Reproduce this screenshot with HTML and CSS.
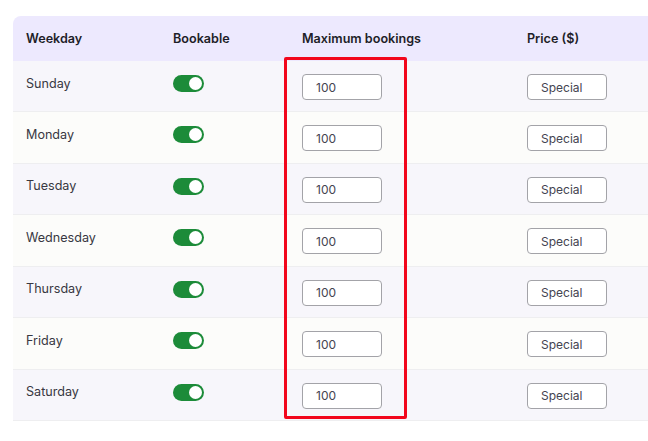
FILE: index.html
```html
<!DOCTYPE html>
<html>
<head>
<meta charset="utf-8">
<link rel="stylesheet" href="styles.css">
</head>
<body>
<div class="page">
  <div class="table">
    <div class="row head">
      <div class="cell">Weekday</div>
      <div class="cell">Bookable</div>
      <div class="cell">Maximum bookings</div>
      <div class="cell">Price ($)</div>
    </div>
    <div class="row odd">
      <div class="cell txt">Sunday</div>
      <div class="cell tog"><span class="toggle"><span class="knob"></span></span></div>
      <div class="cell"><input class="field" value="100"></div>
      <div class="cell"><input class="field" value="Special"></div>
    </div>
    <div class="row even">
      <div class="cell txt">Monday</div>
      <div class="cell tog"><span class="toggle"><span class="knob"></span></span></div>
      <div class="cell"><input class="field" value="100"></div>
      <div class="cell"><input class="field" value="Special"></div>
    </div>
    <div class="row odd">
      <div class="cell txt">Tuesday</div>
      <div class="cell tog"><span class="toggle"><span class="knob"></span></span></div>
      <div class="cell"><input class="field" value="100"></div>
      <div class="cell"><input class="field" value="Special"></div>
    </div>
    <div class="row even">
      <div class="cell txt">Wednesday</div>
      <div class="cell tog"><span class="toggle"><span class="knob"></span></span></div>
      <div class="cell"><input class="field" value="100"></div>
      <div class="cell"><input class="field" value="Special"></div>
    </div>
    <div class="row odd">
      <div class="cell txt">Thursday</div>
      <div class="cell tog"><span class="toggle"><span class="knob"></span></span></div>
      <div class="cell"><input class="field" value="100"></div>
      <div class="cell"><input class="field" value="Special"></div>
    </div>
    <div class="row even">
      <div class="cell txt">Friday</div>
      <div class="cell tog"><span class="toggle"><span class="knob"></span></span></div>
      <div class="cell"><input class="field" value="100"></div>
      <div class="cell"><input class="field" value="Special"></div>
    </div>
    <div class="row odd">
      <div class="cell txt">Saturday</div>
      <div class="cell tog"><span class="toggle"><span class="knob"></span></span></div>
      <div class="cell"><input class="field" value="100"></div>
      <div class="cell"><input class="field" value="Special"></div>
    </div>
  </div>
  <div class="highlight"></div>
</div>
</body>
</html>
```
FILE: styles.css
```css
html, body {
  margin: 0;
  padding: 0;
  background: #ffffff;
  overflow: hidden;
}
body {
  font-family: Inter, "Noto Sans", "Liberation Sans", sans-serif;
  color: #2b2b33;
  font-size: 12.6px;
}
.page {
  position: relative;
  width: 648px;
  height: 441px;
  padding: 16px 0 0 13px;
  box-sizing: border-box;
  overflow: hidden;
}
.table {
  width: 720px;
}
.row {
  display: grid;
  grid-template-columns: 147px 129px 225px 1fr;
  box-sizing: border-box;
  height: 51.43px;
  border-bottom: 1px solid #eeeef0;
}
.row.head {
  height: 45px;
  background: #ede9fe;
  border-radius: 8px 8px 0 0;
  border-bottom: none;
  font-weight: 600;
  color: #1e1e28;
  align-items: center;
}
.row.odd { background: #f7f6fb; }
.row.even { background: #fcfcfa; }
.cell {
  padding-left: 13px;
  line-height: 18px;
}
.row.odd .cell, .row.even .cell {
  padding-top: 13px;
}
.row .cell.txt {
  padding-top: 13.5px;
  color: #383842;
}
.row .cell.tog {
  padding-top: 14px;
}
.toggle {
  display: flex;
  justify-content: flex-end;
  align-items: center;
  width: 31px;
  height: 17px;
  border-radius: 9px;
  background: #1c8b39;
  padding: 0 2px;
  box-sizing: border-box;
}
.knob {
  width: 13px;
  height: 13px;
  border-radius: 50%;
  background: #ffffff;
}
.field {
  display: block;
  width: 80px;
  height: 26px;
  box-sizing: border-box;
  border: 1px solid #a3a3a8;
  border-radius: 4px;
  background: #ffffff;
  padding: 0 0 0 13px;
  font-family: Inter, "Noto Sans", "Liberation Sans", sans-serif;
  font-size: 12px;
  color: #444450;
  margin: 0;
  outline: none;
}
.highlight {
  position: absolute;
  left: 284px;
  top: 57px;
  width: 123px;
  height: 362px;
  box-sizing: border-box;
  border: 3px solid #f2061c;
  border-radius: 2px;
}
```
